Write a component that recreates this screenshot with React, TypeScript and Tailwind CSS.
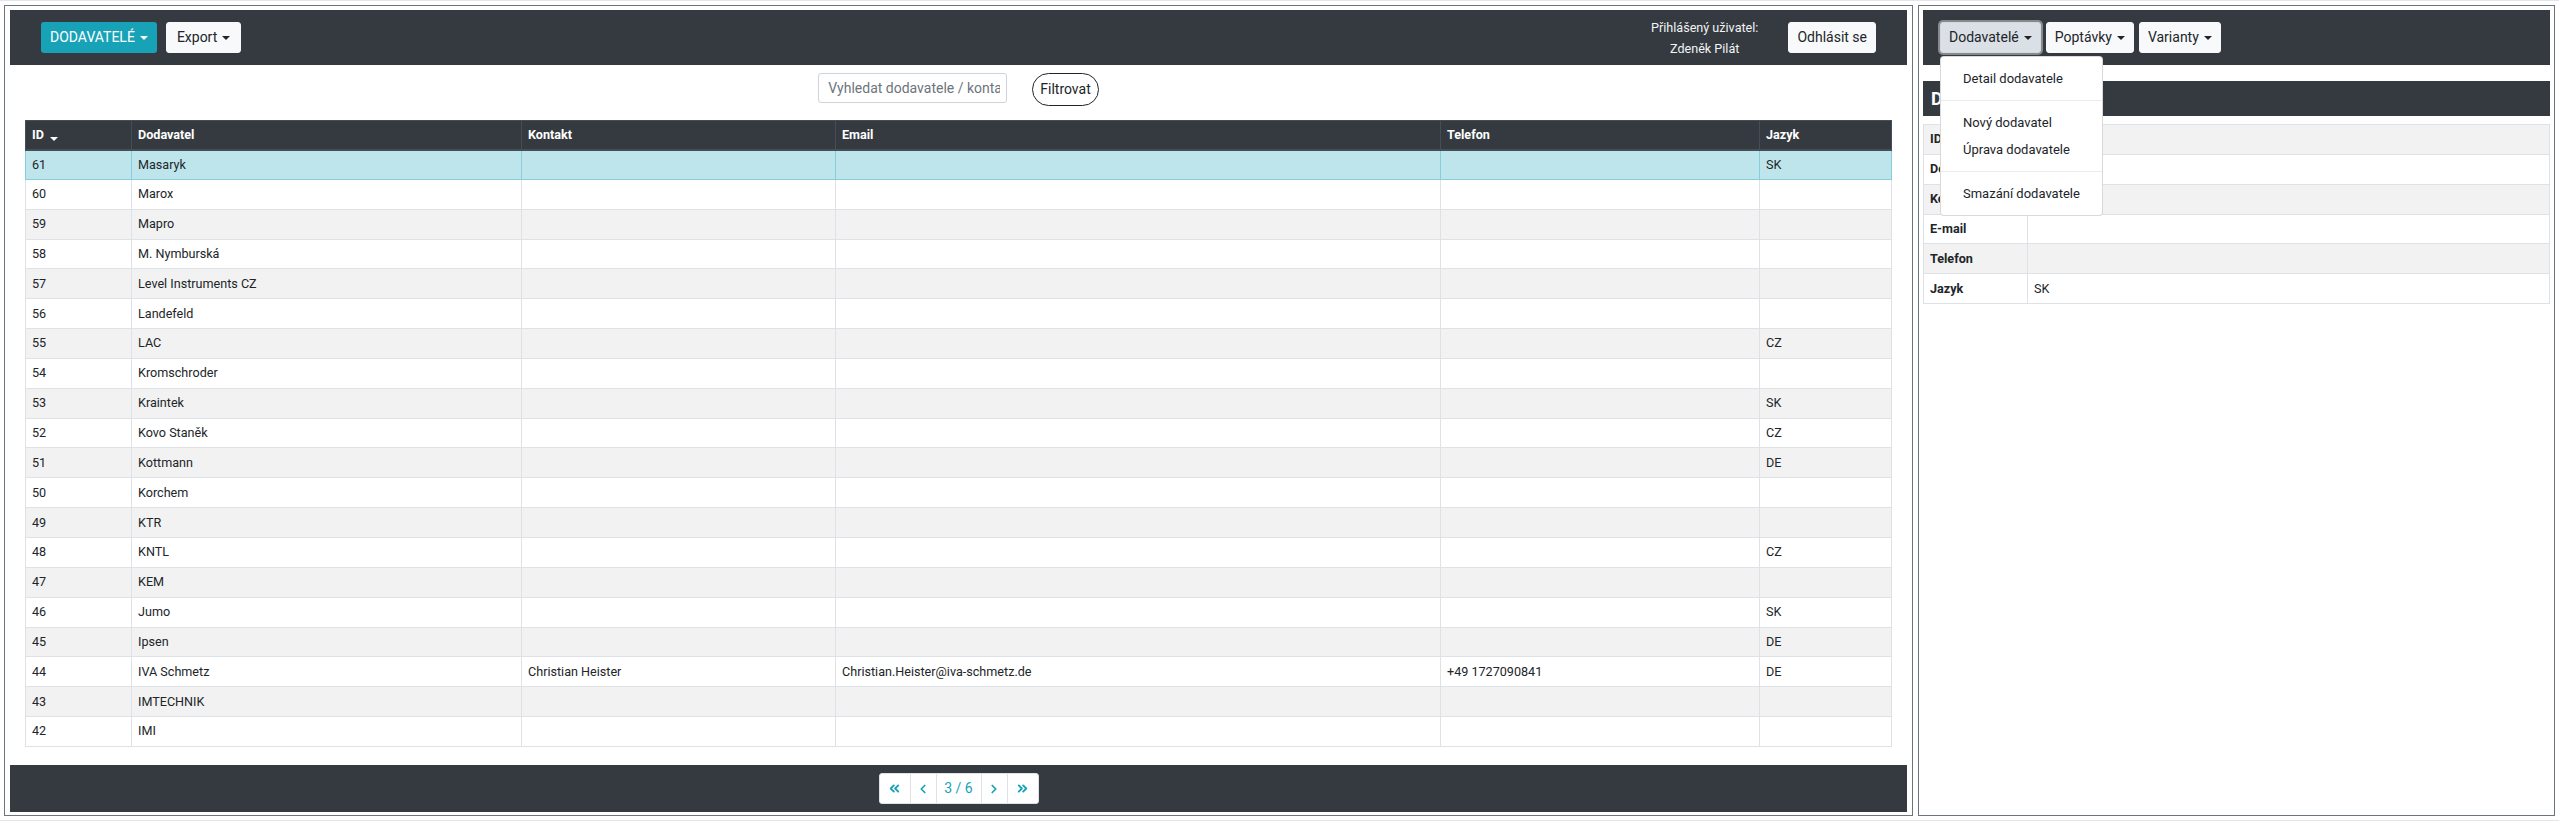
import React from 'react'
import { ChevronsLeft, ChevronLeft, ChevronRight, ChevronsRight } from 'lucide-react'

type Row = {
  id: number
  name: string
  contact?: string
  email?: string
  phone?: string
  lang?: string
}

const rows: Row[] = [
  { id: 61, name: 'Masaryk', lang: 'SK' },
  { id: 60, name: 'Marox' },
  { id: 59, name: 'Mapro' },
  { id: 58, name: 'M. Nymburská' },
  { id: 57, name: 'Level Instruments CZ' },
  { id: 56, name: 'Landefeld' },
  { id: 55, name: 'LAC', lang: 'CZ' },
  { id: 54, name: 'Kromschroder' },
  { id: 53, name: 'Kraintek', lang: 'SK' },
  { id: 52, name: 'Kovo Staněk', lang: 'CZ' },
  { id: 51, name: 'Kottmann', lang: 'DE' },
  { id: 50, name: 'Korchem' },
  { id: 49, name: 'KTR' },
  { id: 48, name: 'KNTL', lang: 'CZ' },
  { id: 47, name: 'KEM' },
  { id: 46, name: 'Jumo', lang: 'SK' },
  { id: 45, name: 'Ipsen', lang: 'DE' },
  {
    id: 44,
    name: 'IVA Schmetz',
    contact: 'Christian Heister',
    email: 'Christian.Heister@iva-schmetz.de',
    phone: '+49 1727090841',
    lang: 'DE',
  },
  { id: 43, name: 'IMTECHNIK' },
  { id: 42, name: 'IMI' },
]

const detail = [
  { label: 'ID', value: '' },
  { label: 'Dodavatel', value: '' },
  { label: 'Kontakt', value: '' },
  { label: 'E-mail', value: '' },
  { label: 'Telefon', value: '' },
  { label: 'Jazyk', value: 'SK' },
]

const Caret = () => (
  <span className="ml-[5px] inline-block h-0 w-0 border-x-[4px] border-t-[4px] border-x-transparent border-t-current align-[2px]" />
)

const LightBtn = ({ children, className = '' }: { children: React.ReactNode; className?: string }) => (
  <button
    className={`flex h-[31px] items-center rounded-[3px] border border-[#f8f9fa] bg-[#f8f9fa] text-[14px] text-[#212529] ${className}`}
  >
    {children}
  </button>
)

const td = 'h-[29.85px] px-[6px] py-0 text-left align-middle'
const th = 'h-[29px] px-[6px] py-0 text-left align-middle border border-b-2 border-[#454d55]'

const App = () => {
  return (
    <div
      className="flex h-[825px] w-full flex-col overflow-hidden bg-white text-[#212529]"
      style={{ fontFamily: 'Roboto, "Liberation Sans", sans-serif' }}
    >
      <div className="h-px shrink-0 bg-[#e2e6ea]" />
      <div className="flex shrink-0 gap-[5px] px-[4px] pt-[4px]">
        {/** left panel: supplier list */}
        <div className="flex h-[811px] flex-1 flex-col border border-[#6c757d] px-[5px] pt-[4px] pb-[3px]">
          <div className="flex h-[55px] shrink-0 items-center bg-[#343a40] px-[31px]">
            <button className="flex h-[31px] items-center rounded-[3px] bg-[#17a2b8] px-[9px] text-[14px] uppercase text-white">
              Dodavatelé
              <Caret />
            </button>
            <LightBtn className="ml-[9px] px-[10px]">
              Export
              <Caret />
            </LightBtn>
            <div className="ml-auto text-center text-[12.6px] leading-[21px] text-[#f1f3f5]">
              <div>Přihlášený uživatel:</div>
              <div>Zdeněk Pilát</div>
            </div>
            <LightBtn className="ml-[30px] px-[8px]">Odhlásit se</LightBtn>
          </div>

          <div className="mt-[8px] flex items-start justify-center gap-[25px]">
            <input
              placeholder="Vyhledat dodavatele / kontakt"
              className="h-[30px] w-[189px] rounded-[3px] border border-[#ced4da] pr-[6px] pl-[9px] text-[14px] outline-none placeholder:text-[#6c757d]"
            />
            <button className="h-[33px] rounded-full border border-[#212529] bg-white px-[7px] text-[14px]">
              Filtrovat
            </button>
          </div>

          <div className="mx-[15px] mt-[14px]">
            <table className="w-full table-fixed border-collapse border border-[#dee2e6] text-[12.6px] leading-[18px]">
              <colgroup>
                <col className="w-[106px]" />
                <col className="w-[390px]" />
                <col className="w-[314px]" />
                <col className="w-[605px]" />
                <col className="w-[319px]" />
                <col />
              </colgroup>
              <thead>
                <tr className="bg-[#343a40] font-bold text-white">
                  <th className={th}>
                    ID
                    <span className="ml-[6px] inline-block h-0 w-0 border-x-[4px] border-t-[4px] border-x-transparent border-t-white align-[-2px]" />
                  </th>
                  <th className={th}>Dodavatel</th>
                  <th className={th}>Kontakt</th>
                  <th className={th}>Email</th>
                  <th className={th}>Telefon</th>
                  <th className={th}>Jazyk</th>
                </tr>
              </thead>
              <tbody>
                {rows.map((r, i) => {
                  const active = i === 0
                  const bg = active ? 'bg-[#bee5eb]' : i % 2 === 0 ? 'bg-[#f2f2f2]' : 'bg-white'
                  const bc = active ? 'border-[#86cfda]' : 'border-[#dee2e6]'
                  return (
                    <tr key={r.id} className={bg}>
                      <td className={`${td} border ${bc}`}>{r.id}</td>
                      <td className={`${td} border ${bc}`}>{r.name}</td>
                      <td className={`${td} border ${bc}`}>{r.contact}</td>
                      <td className={`${td} border ${bc}`}>{r.email}</td>
                      <td className={`${td} border ${bc}`}>{r.phone}</td>
                      <td className={`${td} border ${bc}`}>{r.lang}</td>
                    </tr>
                  )
                })}
              </tbody>
            </table>
          </div>

          {/** pager */}
          <div className="mt-auto flex h-[47px] shrink-0 items-center justify-center bg-[#343a40]">
            <div className="flex h-[31px] overflow-hidden rounded-[3px] border border-[#dee2e6] bg-white text-[#17a2b8]">
              <button className="flex w-[31px] items-center justify-center border-r border-[#dee2e6]">
                <ChevronsLeft size={15} strokeWidth={3} />
              </button>
              <button className="flex w-[26px] items-center justify-center border-r border-[#dee2e6]">
                <ChevronLeft size={14} strokeWidth={3} />
              </button>
              <span className="flex w-[45px] items-center justify-center border-r border-[#dee2e6] text-[14px]">3 / 6</span>
              <button className="flex w-[26px] items-center justify-center border-r border-[#dee2e6]">
                <ChevronRight size={14} strokeWidth={3} />
              </button>
              <button className="flex w-[30px] items-center justify-center">
                <ChevronsRight size={15} strokeWidth={3} />
              </button>
            </div>
          </div>
        </div>

        {/** right panel: detail */}
        <div className="flex h-[811px] w-[637px] shrink-0 flex-col border border-[#6c757d] px-[4px] pt-[4px] pb-[3px]">
          <div className="flex h-[55px] shrink-0 items-center gap-[5px] bg-[#343a40] px-[17px]">
            <div className="relative">
              <button className="flex h-[31px] items-center rounded-[3px] border border-[#d3d9df] bg-[#dae0e5] px-[8px] text-[14px] text-[#212529] shadow-[0_0_0_2px_#868a8d]">
                Dodavatelé
                <Caret />
              </button>
              <div className="absolute top-[34px] left-0 z-10 w-[163px] rounded-[4px] border border-black/15 bg-white py-[8px] text-[13px] leading-[19px] text-[#212529]">
                <div className="px-[22px] py-[4px] whitespace-nowrap">Detail dodavatele</div>
                <div className="my-[8px] border-t border-[#e9ecef]" />
                <div className="px-[22px] py-[4px] whitespace-nowrap">Nový dodavatel</div>
                <div className="px-[22px] py-[4px] whitespace-nowrap">Úprava dodavatele</div>
                <div className="my-[8px] border-t border-[#e9ecef]" />
                <div className="px-[22px] py-[4px] whitespace-nowrap">Smazání dodavatele</div>
              </div>
            </div>
            <LightBtn className="px-[8px]">
              Poptávky
              <Caret />
            </LightBtn>
            <LightBtn className="px-[8px]">
              Varianty
              <Caret />
            </LightBtn>
          </div>

          <div className="mt-[16px] flex h-[35px] shrink-0 items-center bg-[#343a40] px-[8px] text-[18px] font-bold text-white">
            Dodavatel
          </div>

          <table className="mt-[8px] w-full table-fixed border-collapse border border-[#dee2e6] text-[12.6px] leading-[18px]">
            <colgroup>
              <col className="w-[104px]" />
              <col />
            </colgroup>
            <tbody>
              {detail.map((d, i) => (
                <tr key={d.label} className={i % 2 === 0 ? 'bg-[#f2f2f2]' : 'bg-white'}>
                  <th className={`${td} border border-[#dee2e6] font-bold`}>{d.label}</th>
                  <td className={`${td} border border-[#dee2e6]`}>{d.value}</td>
                </tr>
              ))}
            </tbody>
          </table>
        </div>
      </div>
      <div className="mt-[4px] h-px shrink-0 bg-[#e2e6ea]" />
    </div>
  )
}

export default App
